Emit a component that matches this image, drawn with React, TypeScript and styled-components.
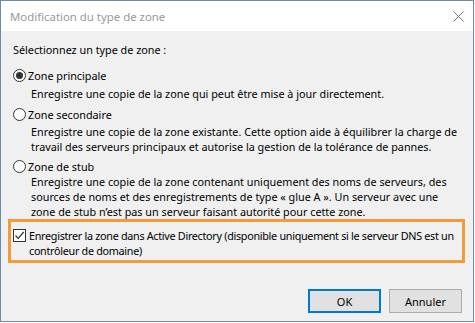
import styled, { createGlobalStyle } from "styled-components"

const Global = createGlobalStyle`
    html, body {
        margin: 0;
        padding: 0;
        background: #ffffff;
    }
    body {
        font-family: "Noto Sans", "Liberation Sans", sans-serif;
        font-size: 10.8px;
        color: #000;
    }
`

const Window = styled.div`
    width: 474px;
    height: 322px;
    box-sizing: border-box;
    border: 1px solid #6d8bab;
    display: flex;
    flex-direction: column;
    background: #f0f0f0;
    overflow: hidden;
`

const TitleBar = styled.div`
    height: 30px;
    flex: none;
    background: #ffffff;
    display: flex;
    align-items: center;
    justify-content: space-between;
    padding: 0 9px 0 9px;
    color: #9a9a9a;
    font-size: 11.4px;
`

const Close = styled.svg`
    width: 11px;
    height: 11px;
`

const Content = styled.div`
    flex: 1;
    display: flex;
    flex-direction: column;
    padding: 11px 8px 8px 7px;
    white-space: nowrap;
`

const Heading = styled.div`
    line-height: 15px;
    padding-left: 5px;
`

const Option = styled.label<{ $top: number }>`
    display: flex;
    align-items: center;
    gap: 2px;
    line-height: 15px;
    margin-top: ${p => p.$top}px;
    padding-left: 5px;
`

const Radio = styled.span<{ $on?: boolean }>`
    width: 11px;
    height: 11px;
    border: 1px solid #333;
    border-radius: 50%;
    background: #fff;
    display: flex;
    align-items: center;
    justify-content: center;
    &::after {
        content: "";
        width: 7px;
        height: 7px;
        border-radius: 50%;
        background: ${p => (p.$on ? "#333" : "transparent")};
    }
`

const Desc = styled.div<{ $top: number }>`
    line-height: 15px;
    margin-top: ${p => p.$top}px;
    padding-left: 23px;
`

const Highlight = styled.div`
    margin-top: 0;
    border: 3px solid #f39a3a;
    padding: 6px 4px 2px 2px;
    display: flex;
    align-items: flex-start;
    gap: 3px;
    line-height: 15px;
    letter-spacing: -0.3px;
`

const Check = styled.span`
    flex: none;
    width: 11px;
    height: 11px;
    margin-top: 1px;
    border: 1px solid #333;
    background: #fff;
    display: flex;
    align-items: center;
    justify-content: center;
`

const Buttons = styled.div`
    margin-top: auto;
    display: flex;
    justify-content: flex-end;
    gap: 8px;
    padding-right: 3px;
`

const Button = styled.button<{ $default?: boolean }>`
    width: 73px;
    height: 24px;
    box-sizing: border-box;
    font-family: inherit;
    font-size: 11px;
    color: #000;
    background: #e1e1e1;
    border: ${p => (p.$default ? "2px solid #0078d7" : "1px solid #adadad")};
    padding: 0;
`

export default function App() {
    return (
        <>
            <Global />
            <Window>
                <TitleBar>
                    <span>Modification du type de zone</span>
                    <Close viewBox="0 0 11 11">
                        <path d="M0.5 0.5 L10.5 10.5 M10.5 0.5 L0.5 10.5" stroke="#777" strokeWidth="1" fill="none" />
                    </Close>
                </TitleBar>
                <Content>
                    <Heading>Sélectionnez un type de zone :</Heading>
                    <Option $top={11}>
                        <Radio $on />Zone principale
                    </Option>
                    <Desc $top={3}>Enregistre une copie de la zone qui peut être mise à jour directement.</Desc>
                    <Option $top={6}>
                        <Radio />Zone secondaire
                    </Option>
                    <Desc $top={2}>
                        Enregistre une copie de la zone existante. Cette option aide à équilibrer la charge de<br />
                        travail des serveurs principaux et autorise la gestion de la tolérance de pannes.
                    </Desc>
                    <Option $top={5}>
                        <Radio />Zone de stub
                    </Option>
                    <Desc $top={0}>
                        Enregistre une copie de la zone contenant uniquement des noms de serveurs, des<br />
                        sources de noms et des enregistrements de type « glue A ». Un serveur avec une<br />
                        zone de stub n’est pas un serveur faisant autorité pour cette zone.
                    </Desc>
                    <Highlight>
                        <Check>
                            <svg width="11" height="11" viewBox="0 0 11 11">
                                <path d="M1.5 5.5 L4.2 8.3 L9.7 2" stroke="#333" strokeWidth="1.2" fill="none" />
                            </svg>
                        </Check>
                        <span>
                            Enregistrer la zone dans Active Directory (disponible uniquement si le serveur DNS est un<br />
                            contrôleur de domaine)
                        </span>
                    </Highlight>
                    <Buttons>
                        <Button $default>OK</Button>
                        <Button>Annuler</Button>
                    </Buttons>
                </Content>
            </Window>
        </>
    )
}
